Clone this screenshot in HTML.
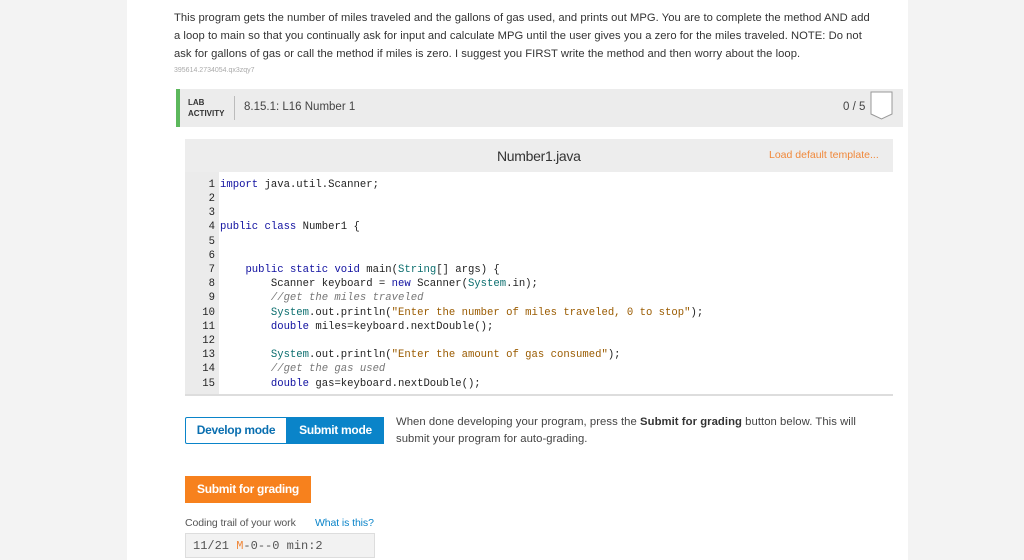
<!DOCTYPE html>
<html><head><style>
*{margin:0;padding:0;box-sizing:border-box}
body{width:1024px;height:560px;background:#f3f3f3;font-family:"Liberation Sans",sans-serif;overflow:hidden;position:relative}
.page{position:absolute;left:127px;top:0;width:781px;height:560px;background:#fff}
.abs{position:absolute}
.desc{left:174px;top:9px;font-size:11.2px;line-height:18px;color:#333;letter-spacing:0.05px;white-space:nowrap}
.code{font-family:"Liberation Mono",monospace;font-size:10.6px}
.ln{position:absolute;left:185px;width:30px;text-align:right;color:#222}
.cl{position:absolute;left:220px;color:#222;white-space:pre}
.k{color:#1010a0}.t{color:#0b6e6e}.s{color:#9a5b00}.c{color:#777;font-style:italic}
</style></head><body>
<div class="page"></div>
<div class="abs desc">This program gets the number of miles traveled and the gallons of gas used, and prints out MPG. You are to complete the method AND add<br>a loop to main so that you continually ask for input and calculate MPG until the user gives you a zero for the miles traveled. NOTE: Do not<br>ask for gallons of gas or call the method if miles is zero. I suggest you FIRST write the method and then worry about the loop.</div>
<div class="abs" style="left:174px;top:67px;font-size:7px;color:#aaa">395614.2734054.qx3zqy7</div>
<div class="abs" style="left:176px;top:89px;width:727px;height:38px;background:#ececec;border-left:4px solid #5cb85c"></div>
<div class="abs" style="left:188px;top:97px;font-size:8px;font-weight:bold;line-height:11px;color:#333">LAB<br>ACTIVITY</div>
<div class="abs" style="left:234px;top:96px;width:1px;height:24px;background:#bbb"></div>
<div class="abs" style="left:244px;top:101px;font-size:11.5px;color:#444;letter-spacing:0px">8.15.1: L16 Number 1</div>
<div class="abs" style="left:843px;top:101px;font-size:11.5px;color:#444">0 / 5</div>
<svg class="abs" style="left:870px;top:91px" width="24" height="29"><path d="M1 1H22V23L11.5 28L1 23Z" fill="#fff" stroke="#999"/></svg>
<div class="abs" style="left:185px;top:139px;width:708px;height:33px;background:#ededed"></div>
<div class="abs" style="left:497px;top:148px;font-size:14px;color:#333;letter-spacing:-0.3px">Number1.java</div>
<div class="abs" style="left:769px;top:149px;font-size:10.5px;color:#f0883a;letter-spacing:0px">Load default template...</div>
<div class="abs" style="left:185px;top:172px;width:708px;height:224px;background:#fff;border-bottom:2px solid #ddd"></div>
<div class="abs" style="left:185px;top:172px;width:34px;height:222px;background:#ebebeb"></div>
<div class="code">
<div class="ln" style="top:179px">1</div><div class="cl" style="top:179px"><span class="k">import</span> java.util.Scanner;</div>
<div class="ln" style="top:193px">2</div>
<div class="ln" style="top:207px">3</div>
<div class="ln" style="top:221px">4</div><div class="cl" style="top:221px"><span class="k">public class</span> Number1 {</div>
<div class="ln" style="top:236px">5</div>
<div class="ln" style="top:250px">6</div>
<div class="ln" style="top:264px">7</div><div class="cl" style="top:264px">    <span class="k">public static void</span> main(<span class="t">String</span>[] args) {</div>
<div class="ln" style="top:278px">8</div><div class="cl" style="top:278px">        Scanner keyboard = <span class="k">new</span> Scanner(<span class="t">System</span>.in);</div>
<div class="ln" style="top:292px">9</div><div class="cl c" style="top:292px">        //get the miles traveled</div>
<div class="ln" style="top:307px">10</div><div class="cl" style="top:307px">        <span class="t">System</span>.out.println(<span class="s">"Enter the number of miles traveled, 0 to stop"</span>);</div>
<div class="ln" style="top:321px">11</div><div class="cl" style="top:321px">        <span class="k">double</span> miles=keyboard.nextDouble();</div>
<div class="ln" style="top:335px">12</div>
<div class="ln" style="top:349px">13</div><div class="cl" style="top:349px">        <span class="t">System</span>.out.println(<span class="s">"Enter the amount of gas consumed"</span>);</div>
<div class="ln" style="top:363px">14</div><div class="cl c" style="top:363px">        //get the gas used</div>
<div class="ln" style="top:378px">15</div><div class="cl" style="top:378px">        <span class="k">double</span> gas=keyboard.nextDouble();</div>
</div>
<div class="abs" style="left:185px;top:417px;width:102px;height:27px;border:1px solid #0a84c9;border-radius:2px 0 0 2px;color:#0a6fb0;font-size:12px;font-weight:bold;text-align:center;line-height:25px;letter-spacing:-0.3px">Develop mode</div>
<div class="abs" style="left:287px;top:417px;width:97px;height:27px;background:#0a84c9;color:#fff;font-size:12px;font-weight:bold;text-align:center;line-height:27px;letter-spacing:-0.3px">Submit mode</div>
<div class="abs" style="left:396px;top:414px;white-space:nowrap;font-size:11.3px;line-height:17px;color:#444;letter-spacing:0.05px">When done developing your program, press the <b style="color:#333">Submit for grading</b> button below. This will<br>submit your program for auto-grading.</div>
<div class="abs" style="left:185px;top:476px;width:126px;height:27px;background:#f7811d;color:#fff;font-size:12px;font-weight:bold;text-align:center;line-height:27px;letter-spacing:-0.3px">Submit for grading</div>
<div class="abs" style="left:185px;top:517px;font-size:10.5px;color:#555;letter-spacing:-0.1px">Coding trail of your work</div>
<div class="abs" style="left:315px;top:517px;font-size:10.5px;color:#0a84c9;letter-spacing:-0.1px">What is this?</div>
<div class="abs code" style="left:185px;top:533px;width:190px;height:25px;background:#f2f2f2;border:1px solid #ddd;font-size:12px;line-height:24px;padding-left:7px;color:#555">11/21 <span style="color:#f0883a">M</span>-0--0 min:2</div>
</body></html>
